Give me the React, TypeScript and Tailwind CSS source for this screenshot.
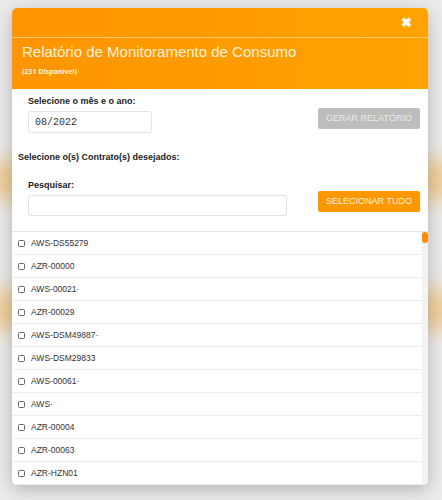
import { useState } from "react";

const CONTRACTS = [
  "AWS-DS55279",
  "AZR-00000",
  "AWS-00021·",
  "AZR-00029",
  "AWS-DSM49887·",
  "AWS-DSM29833",
  "AWS-00061·",
  "AWS·",
  "AZR-00004",
  "AZR-00063",
  "AZR-HZN01",
];

export default function App() {
  const [month, setMonth] = useState("08/2022");
  const [search, setSearch] = useState("");
  const [checked, setChecked] = useState<Record<string, boolean>>({});

  return (
    <div className="relative w-[442px] h-[500px] overflow-hidden bg-[#ececec] font-['Liberation_Sans',Arial,sans-serif]">
      {/* blurred page behind the modal */}
      <div className="absolute left-[-20px] top-[160px] w-[60px] h-[40px] bg-[#f2c27a] blur-[10px] opacity-70" />
      <div className="absolute left-[-20px] top-[290px] w-[60px] h-[40px] bg-[#f2c27a] blur-[10px] opacity-70" />
      <div className="absolute right-[-20px] top-[160px] w-[60px] h-[40px] bg-[#f2c27a] blur-[10px] opacity-70" />
      <div className="absolute right-[-20px] top-[290px] w-[60px] h-[40px] bg-[#f2c27a] blur-[10px] opacity-70" />

      <div className="relative pt-[8px] px-[12px]">
        <div className="w-[416px] h-[477px] bg-white rounded-[5px] overflow-hidden shadow-[0_4px_18px_rgba(0,0,0,0.25)] flex flex-col">
          <div className="bg-gradient-to-r from-[#ff9500] to-[#ffa300]">
            <div className="h-[30px] flex items-center justify-end pr-[16px] border-b border-[#ffc56a]">
              <span className="text-white text-[13px] font-bold leading-none">✖</span>
            </div>
            <div className="h-[51px] px-[10px] pt-[5px]">
              <div className="text-[#fff3dc] text-[15px] leading-[18px]">Relatório de Monitoramento de Consumo</div>
              <div className="mt-[6px] text-[#fff3dc] text-[7px] font-bold font-['Open_Sans',sans-serif]">(231 Disponível)</div>
            </div>
          </div>

          <div className="flex items-start justify-between pl-[16px] pr-[8px] pt-[7px]">
            <div className="flex flex-col">
              <label className="text-[9px] font-bold text-[#222] leading-[11px]">Selecione o mês e o ano:</label>
              <input
                value={month}
                onChange={(e) => setMonth(e.target.value)}
                className="mt-[4px] w-[124px] h-[22px] border border-[#e2e2e2] rounded-[3px] px-[6px] text-[10px] text-[#333] font-['Liberation_Mono',monospace] outline-none"
              />
            </div>
            <button className="mt-[12px] w-[102px] h-[21px] bg-[#bdbdbd] rounded-[2px] text-[9px] text-[#ececec]">
              GERAR RELATÓRIO
            </button>
          </div>

          <div className="pl-[6px] mt-[19px] text-[9px] font-bold text-[#222] leading-[11px]">
            Selecione o(s) Contrato(s) desejados:
          </div>

          <div className="flex items-start justify-between pl-[16px] pr-[8px] mt-[17px]">
            <div className="flex flex-col">
              <label className="text-[9px] font-bold text-[#222] leading-[11px]">Pesquisar:</label>
              <input
                value={search}
                onChange={(e) => setSearch(e.target.value)}
                className="mt-[4px] w-[259px] h-[21px] border border-[#e2e2e2] rounded-[3px] px-[6px] text-[10px] outline-none"
              />
            </div>
            <button className="mt-[11px] w-[102px] h-[21px] bg-[#ff9800] rounded-[2px] text-[9px] text-[#fff0d8]">
              SELECIONAR TUDO
            </button>
          </div>

          <div className="mt-[15px] flex flex-1 min-h-0 border-t border-[#e6e6e6]">
            <div className="flex-1 overflow-hidden">
              {CONTRACTS.filter((c) => c.toLowerCase().includes(search.toLowerCase())).map((c) => (
                <label key={c} className="h-[23px] flex items-center border-b border-[#ececec] pl-[6px] cursor-pointer">
                  <input
                    type="checkbox"
                    checked={!!checked[c]}
                    onChange={() => setChecked({ ...checked, [c]: !checked[c] })}
                    className="appearance-none w-[7px] h-[7px] border border-[#666] rounded-[1.5px] mr-[6px] checked:bg-[#ff9800]"
                  />
                  <span className="text-[8.5px] text-[#333]">{c}</span>
                </label>
              ))}
            </div>
            <div className="w-[6px] bg-[#f3f3f3] relative">
              <div className="absolute left-[0px] top-[0px] w-[6px] h-[11px] bg-[#ff8c00] rounded-[3px]" />
            </div>
          </div>
        </div>
      </div>
    </div>
  );
}
